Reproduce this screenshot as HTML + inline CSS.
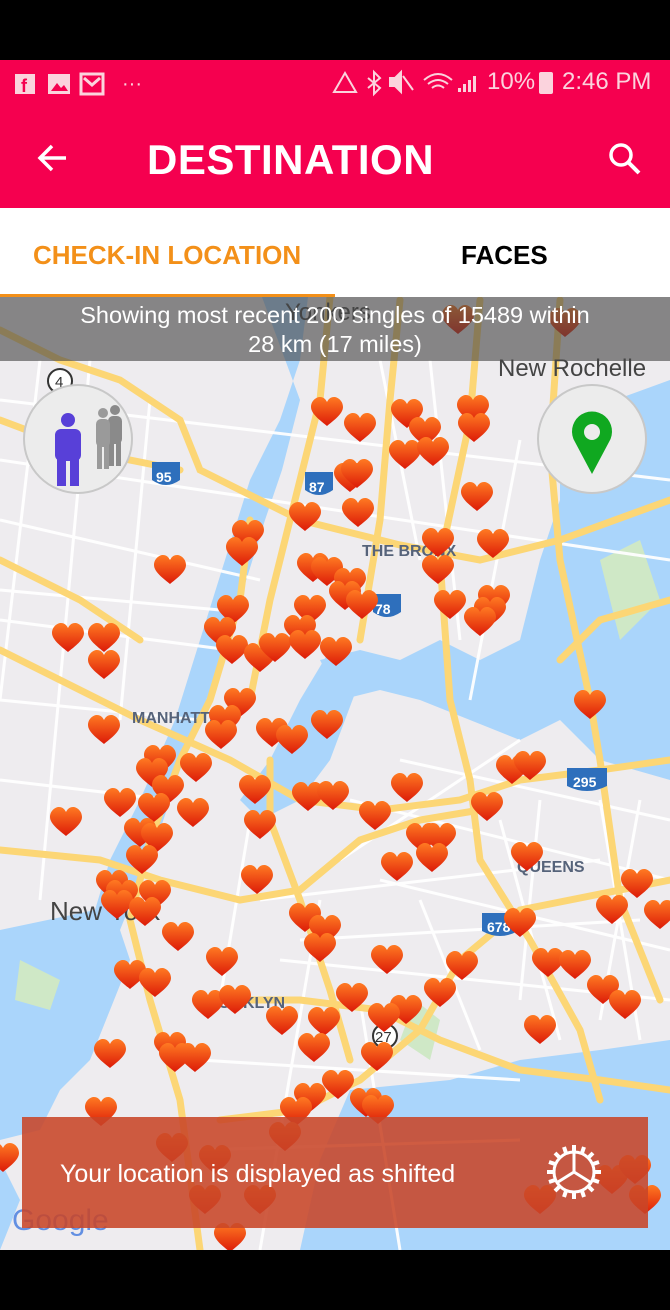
<!DOCTYPE html>
<html><head><meta charset="utf-8"><style>
*{margin:0;padding:0;box-sizing:border-box}
body{width:670px;height:1310px;background:#000;position:relative;overflow:hidden;font-family:"Liberation Sans",Roboto,sans-serif}
.hdr{position:absolute;left:0;top:60px;width:670px;height:148px;background:#f5004f}
.status{position:absolute;top:8px;left:0;width:670px;height:30px;color:#fbd3dd;font-size:24px}
.title{position:absolute;left:147px;top:76px;color:#fff;font-weight:bold;font-size:42px;letter-spacing:0.5px}
.tabs{position:absolute;top:208px;left:0;width:670px;height:89px;background:#fff}
.tab1{position:absolute;left:33px;top:32px;color:#f39019;font-size:26px;font-weight:bold}
.tab2{position:absolute;left:461px;top:32px;color:#000;font-size:26px;font-weight:bold}
.ul{position:absolute;left:0;top:86px;width:335px;height:4px;background:#f39019}
.map{position:absolute;left:0;top:297px;width:670px;height:953px;overflow:hidden;background:#eeecef}
.band{position:absolute;left:0;top:297px;width:670px;height:64px;background:rgba(70,70,70,0.62);color:#fff;font-size:23.5px;text-align:center;line-height:29px;padding-top:4px}
.circ{position:absolute;width:110px;height:110px;border-radius:55px;background:#ececec;border:2px solid #c8c8c8}
.banner{position:absolute;left:22px;top:1117px;width:626px;height:111px;background:rgba(200,70,40,0.88);color:#fff;font-size:25px}
</style></head><body>
<div class="hdr">
 <div class="status">
  <svg width="670" height="30" style="position:absolute;left:0;top:0">
   <rect x="15" y="6" width="20" height="20" fill="#fbd3dd"/><text x="21" y="24" font-size="18" font-weight="bold" fill="#f5004f" font-family="Liberation Sans">f</text>
   <rect x="48" y="6" width="22" height="20" fill="#fbd3dd"/><path d="M51 23 L57 15 L61 20 L64 17 L68 23Z" fill="#f5004f"/>
   <rect x="81" y="6" width="22" height="20" fill="none" stroke="#fbd3dd" stroke-width="3"/><path d="M84 10 L92 17 L100 10" stroke="#fbd3dd" stroke-width="3" fill="none"/>
   <text x="122" y="22" font-size="20" fill="#fbd3dd">···</text>
   <path d="M345 5 L356 24 L334 24Z" fill="none" stroke="#fbd3dd" stroke-width="2"/>
   <path d="M368 10 L380 20 L374 26 L374 4 L380 10 L368 20" fill="none" stroke="#fbd3dd" stroke-width="2"/>
   <path d="M390 10 h5 l6 -6 v20 l-6 -6 h-5Z M403 8 l10 14" fill="#fbd3dd" stroke="#fbd3dd" stroke-width="2"/>
   <path d="M424 12 Q438 0 452 12 M428 16 Q438 8 448 16 M432 20 Q438 15 444 20" fill="none" stroke="#fbd3dd" stroke-width="2"/>
   <path d="M458 24 h3 v-4 h-3Z M463 24 h3 v-8 h-3Z M468 24 h3 v-12 h-3Z M473 24 h3 v-16 h-3Z" fill="#fbd3dd"/>
  </svg>
  <span style="position:absolute;left:487px;top:0">10%</span>
  <span style="position:absolute;left:539px;top:4px;width:14px;height:22px;background:#fbd3dd;border-radius:2px"></span>
  <span style="position:absolute;left:562px;top:0">2:46 PM</span>
 </div>
 <svg style="position:absolute;left:36px;top:82px" width="34" height="34"><path d="M30 16 H5 M16 4 L4 16 L16 28" stroke="#fff" stroke-width="3.5" fill="none"/></svg>
 <div class="title">DESTINATION</div>
 <svg style="position:absolute;left:606px;top:80px" width="36" height="36"><circle cx="15" cy="15" r="10" stroke="#fff" stroke-width="3.5" fill="none"/><path d="M22 22 L33 33" stroke="#fff" stroke-width="4"/></svg>
</div>
<div class="tabs"><div class="tab1">CHECK-IN LOCATION</div><div class="tab2">FACES</div><div class="ul"></div></div>
<div class="map">
<svg width="670" height="953" viewBox="0 297 670 953">
<defs>
<linearGradient id="hg" x1="0" y1="0" x2="0" y2="1"><stop offset="0" stop-color="#ff7a22"/><stop offset="1" stop-color="#dc1a08"/></linearGradient>
<path id="h" d="M0 14 C-6 9 -16 2 -16 -5 C-16 -11 -11 -15 -7 -15 C-3 -15 -1 -12 0 -10 C1 -12 3 -15 7 -15 C11 -15 16 -11 16 -5 C16 2 6 9 0 14Z" fill="url(#hg)"/>
</defs>
<g fill="#aad5fb">
<path d="M262 297 L308 297 L300 360 L280 420 L250 480 L225 560 L200 640 L175 720 L140 800 L110 860 L95 910 L0 930 L0 1140 L40 1130 L60 1090 L90 1060 L110 1010 L130 960 L120 930 L140 880 L160 830 L180 770 L210 690 L240 600 L265 520 L282 470 L300 400 Z"/>
<path d="M560 420 L670 380 L670 780 L600 760 L560 720 L520 740 L470 720 L420 700 L380 690 L340 700 L320 660 L360 650 L400 660 L440 640 L480 660 L520 640 L540 560 L560 500 Z"/>
<path d="M330 650 L360 680 L330 760 L300 800 L260 820 L240 800 L270 760 L300 700Z"/>
<path d="M350 1090 L450 1080 L520 1060 L600 1050 L670 1040 L670 1250 L300 1250 L320 1160 Z"/>
<path d="M0 1160 L20 1200 L0 1250Z"/>
</g>
<g fill="#cfe8c6">
<path d="M600 560 L640 540 L660 600 L620 640Z"/><path d="M20 960 L60 980 L50 1010 L15 1000Z"/><path d="M415 1000 L440 1020 L430 1060 L400 1040Z"/>
</g>
<g stroke="#fff" stroke-width="3" fill="none" opacity="0.95">
<path d="M0 400 L670 480 M0 460 L670 560 M0 520 L260 580 M0 620 L230 650 M400 760 L670 820 M380 880 L670 950 M280 960 L670 1000 M200 1060 L520 1080 M350 800 L670 880 M0 700 L200 720 M0 780 L170 800 M260 900 L600 860 M300 940 L640 920 M200 1150 L520 1140 M0 590 L220 610 M340 860 L520 740"/>
<path d="M40 360 L0 700 M90 360 L40 900 M150 400 L120 720 M380 360 L420 560 M430 360 L460 640 M520 440 L470 700 M600 800 L640 1040 M500 820 L560 1040 M420 900 L480 1050 M320 900 L260 1250 M360 1000 L400 1250 M250 820 L220 1000 M540 800 L520 1000 M640 800 L600 1020"/>
</g>
<g stroke="#fcd675" stroke-width="7" fill="none" stroke-linecap="round">
<path d="M0 330 L60 360 L120 380 L180 420 L200 470 L300 520 L400 545 L480 560 L560 540 L670 500"/>
<path d="M0 420 L80 450 L180 470"/>
<path d="M330 297 L320 400 L300 480 L270 600 L250 700"/>
<path d="M400 300 L390 400 L380 520 L360 640"/>
<path d="M250 520 L240 600 L210 700 L180 760 L150 840 L130 920 L150 1000 L180 1100 L200 1250"/>
<path d="M0 650 L60 680 L140 720 L230 760 L300 800 L380 810 L460 800 L520 780 L600 770 L670 760"/>
<path d="M0 850 L100 860 L160 880 L240 900 L300 890 L360 840 L420 820 L480 810"/>
<path d="M0 560 L80 600 L140 640"/>
<path d="M480 300 L470 420 L440 560 L450 700 L470 780 L480 860 L530 940 L580 1030 L600 1100"/>
<path d="M560 300 L550 450 L560 560 L590 700 L600 760 L620 900 L660 1000"/>
<path d="M230 1000 L300 1000 L380 1010 L440 1040 L520 1070 L600 1080 L670 1090"/>
<path d="M220 1120 L300 1110 L360 1080 L420 1030 L460 960 L520 910 L670 880"/>
<path d="M670 600 L600 620 L560 660"/>
<path d="M270 760 L270 820 L300 900 L330 990 L350 1060"/>
</g>
<g font-family="Liberation Sans" font-weight="bold" fill="#56637a" font-size="16">
<text x="362" y="556">THE BRONX</text><text x="132" y="723">MANHATTAN</text><text x="517" y="872">QUEENS</text><text x="195" y="1008">BROOKLYN</text>
</g>
<g font-family="Liberation Sans" fill="#444" font-size="26"><text x="50" y="920">New York</text><text x="498" y="376" font-size="24">New Rochelle</text><text x="285" y="320" font-size="24">Yonkers</text></g>
<g font-family="Liberation Sans" font-weight="bold" font-size="14" fill="#fff">
<path d="M152 462 h28 v18 q-14 10 -28 0Z" fill="#2e6fbc"/><text x="156" y="482">95</text>
<path d="M305 472 h28 v18 q-14 10 -28 0Z" fill="#2e6fbc"/><text x="309" y="492">87</text>
<path d="M373 594 h28 v18 q-14 10 -28 0Z" fill="#2e6fbc"/><text x="375" y="614">78</text>
<path d="M567 768 h40 v18 q-20 10 -40 0Z" fill="#2e6fbc"/><text x="573" y="787">295</text>
<path d="M482 913 h36 v18 q-18 10 -36 0Z" fill="#2e6fbc"/><text x="487" y="932">678</text>
</g>
<circle cx="385" cy="1036" r="12" fill="#fff" stroke="#333" stroke-width="2"/><text x="375" y="1042" font-size="15" font-family="Liberation Sans" fill="#333">27</text>
<circle cx="60" cy="381" r="12" fill="#fff" stroke="#333" stroke-width="2"/><text x="55" y="387" font-size="15" font-family="Liberation Sans" fill="#333">4</text>
<g>
<use href="#h" x="327" y="412"/><use href="#h" x="360" y="428"/><use href="#h" x="407" y="414"/><use href="#h" x="425" y="432"/><use href="#h" x="473" y="410"/><use href="#h" x="474" y="428"/><use href="#h" x="405" y="455"/><use href="#h" x="433" y="452"/><use href="#h" x="350" y="478"/><use href="#h" x="357" y="474"/><use href="#h" x="477" y="497"/><use href="#h" x="305" y="517"/><use href="#h" x="358" y="513"/><use href="#h" x="248" y="535"/><use href="#h" x="242" y="552"/><use href="#h" x="438" y="543"/><use href="#h" x="493" y="544"/><use href="#h" x="170" y="570"/><use href="#h" x="438" y="570"/><use href="#h" x="313" y="568"/><use href="#h" x="327" y="572"/><use href="#h" x="350" y="583"/><use href="#h" x="345" y="596"/><use href="#h" x="362" y="605"/><use href="#h" x="310" y="610"/><use href="#h" x="233" y="610"/><use href="#h" x="450" y="605"/><use href="#h" x="494" y="600"/><use href="#h" x="490" y="612"/><use href="#h" x="480" y="622"/><use href="#h" x="68" y="638"/><use href="#h" x="104" y="638"/><use href="#h" x="104" y="665"/><use href="#h" x="220" y="632"/><use href="#h" x="232" y="650"/><use href="#h" x="260" y="658"/><use href="#h" x="275" y="648"/><use href="#h" x="300" y="630"/><use href="#h" x="305" y="645"/><use href="#h" x="336" y="652"/><use href="#h" x="240" y="703"/><use href="#h" x="225" y="720"/><use href="#h" x="221" y="735"/><use href="#h" x="104" y="730"/><use href="#h" x="272" y="733"/><use href="#h" x="292" y="740"/><use href="#h" x="327" y="725"/><use href="#h" x="590" y="705"/><use href="#h" x="160" y="760"/><use href="#h" x="152" y="773"/><use href="#h" x="196" y="768"/><use href="#h" x="168" y="790"/><use href="#h" x="120" y="803"/><use href="#h" x="154" y="808"/><use href="#h" x="193" y="813"/><use href="#h" x="66" y="822"/><use href="#h" x="140" y="833"/><use href="#h" x="157" y="838"/><use href="#h" x="255" y="790"/><use href="#h" x="308" y="797"/><use href="#h" x="333" y="796"/><use href="#h" x="407" y="788"/><use href="#h" x="260" y="825"/><use href="#h" x="375" y="816"/><use href="#h" x="487" y="807"/><use href="#h" x="512" y="770"/><use href="#h" x="530" y="766"/><use href="#h" x="422" y="838"/><use href="#h" x="440" y="838"/><use href="#h" x="142" y="860"/><use href="#h" x="432" y="858"/><use href="#h" x="397" y="867"/><use href="#h" x="527" y="857"/><use href="#h" x="257" y="880"/><use href="#h" x="637" y="884"/><use href="#h" x="155" y="895"/><use href="#h" x="112" y="885"/><use href="#h" x="122" y="895"/><use href="#h" x="117" y="905"/><use href="#h" x="145" y="912"/><use href="#h" x="178" y="937"/><use href="#h" x="612" y="910"/><use href="#h" x="660" y="915"/><use href="#h" x="520" y="923"/><use href="#h" x="305" y="918"/><use href="#h" x="325" y="930"/><use href="#h" x="320" y="948"/><use href="#h" x="222" y="962"/><use href="#h" x="387" y="960"/><use href="#h" x="462" y="966"/><use href="#h" x="548" y="963"/><use href="#h" x="575" y="965"/><use href="#h" x="130" y="975"/><use href="#h" x="155" y="983"/><use href="#h" x="603" y="990"/><use href="#h" x="625" y="1005"/><use href="#h" x="352" y="998"/><use href="#h" x="208" y="1005"/><use href="#h" x="235" y="1000"/><use href="#h" x="282" y="1021"/><use href="#h" x="324" y="1022"/><use href="#h" x="406" y="1010"/><use href="#h" x="440" y="993"/><use href="#h" x="384" y="1018"/><use href="#h" x="540" y="1030"/><use href="#h" x="377" y="1057"/><use href="#h" x="314" y="1048"/><use href="#h" x="110" y="1054"/><use href="#h" x="170" y="1047"/><use href="#h" x="175" y="1058"/><use href="#h" x="195" y="1058"/><use href="#h" x="338" y="1085"/><use href="#h" x="310" y="1098"/><use href="#h" x="296" y="1112"/><use href="#h" x="366" y="1103"/><use href="#h" x="378" y="1110"/><use href="#h" x="101" y="1112"/><use href="#h" x="172" y="1148"/><use href="#h" x="215" y="1160"/><use href="#h" x="285" y="1137"/><use href="#h" x="205" y="1200"/><use href="#h" x="260" y="1200"/><use href="#h" x="230" y="1238"/><use href="#h" x="540" y="1200"/><use href="#h" x="612" y="1180"/><use href="#h" x="635" y="1170"/><use href="#h" x="645" y="1200"/><use href="#h" x="458" y="320"/><use href="#h" x="565" y="323"/><use href="#h" x="3" y="1158"/>
</g>
<text x="12" y="1230" font-family="Liberation Sans" font-size="30" fill="#4a7fe0" opacity="0.85">Google</text>
</svg>
</div>
<div class="band">Showing most recent 200 singles of 15489 within<br>28 km (17 miles)</div>
<div class="circ" style="left:23px;top:384px">
 <svg width="110" height="110" style="position:absolute;left:-2px;top:-2px">
  <g fill="#8a8a8a"><circle cx="92" cy="26" r="5"/><rect x="85" y="32" width="14" height="28" rx="5"/><rect x="86" y="56" width="5" height="26"/><rect x="93" y="56" width="5" height="26"/></g>
  <g fill="#9a9a9a"><circle cx="80" cy="29" r="5"/><rect x="73" y="35" width="14" height="28" rx="5"/><rect x="74" y="59" width="5" height="26"/><rect x="81" y="59" width="5" height="26"/></g>
  <g fill="#5840d8"><circle cx="45" cy="36" r="7"/><rect x="32" y="45" width="26" height="32" rx="6"/><rect x="34" y="70" width="9" height="32"/><rect x="47" y="70" width="9" height="32"/></g>
 </svg>
</div>
<div class="circ" style="left:537px;top:384px">
 <svg width="110" height="110" style="position:absolute;left:-2px;top:-2px"><path d="M55 90 L38 58 A20 20 0 1 1 72 58 Z" fill="#10a820"/><circle cx="55" cy="48" r="8" fill="#ececec"/></svg>
</div>
<div class="banner">
 <div style="position:absolute;left:38px;top:43px">Your location is displayed as shifted</div>
 <svg style="position:absolute;left:522px;top:25px" width="60" height="60"><g stroke="#fff" stroke-width="3" fill="none"><circle cx="30" cy="30" r="20"/><path d="M30 30 V11 M30 30 L14 40 M30 30 L46 40"/></g><g stroke="#fff" stroke-width="4"><path d="M30 3 V10 M30 50 V57 M3 30 H10 M50 30 H57 M11 11 L16 16 M44 44 L49 49 M49 11 L44 16 M11 49 L16 44 M20 5 L22 11 M40 5 L38 11 M20 55 L22 49 M40 55 L38 49 M5 20 L11 22 M5 40 L11 38 M55 20 L49 22 M55 40 L49 38"/></g></svg>
</div>
</body></html>
